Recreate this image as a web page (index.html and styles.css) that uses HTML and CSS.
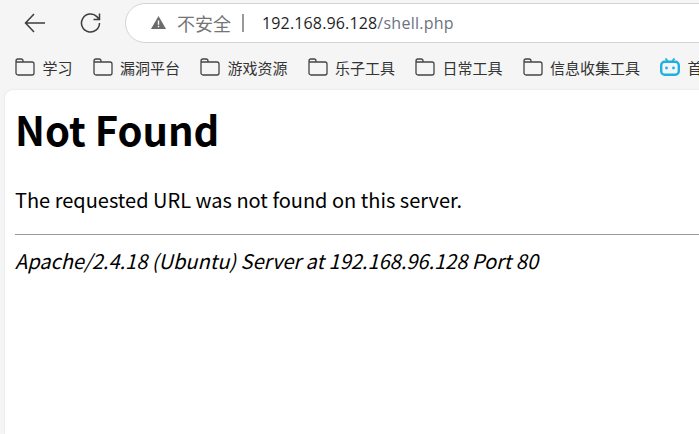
FILE: index.html
```html
<!DOCTYPE html>
<html lang="zh-CN">
<head>
    <meta charset="UTF-8">
    <title>404 Not Found</title>
    <link rel="stylesheet" href="styles.css">
</head>
<body>
    <div class="toolbar">
        <svg class="nav-back" width="22" height="22" viewBox="0 0 22 22"><path d="M21 11H2M10 2 1.500 11l8.500 9" fill="none" stroke="#3c3c3c" stroke-width="1.500"/></svg>
        <svg class="nav-reload" width="22" height="22" viewBox="0 0 22 22"><path d="M19.500 11a9 9 0 1 1-2.640-6.360L19.500 7.500M19.500 1.500v6h-6" fill="none" stroke="#3c3c3c" stroke-width="1.500"/></svg>
        <div class="address">
            <svg class="warn" width="15" height="13" viewBox="0 0 15 13"><path d="M7.500 0 15 13H0z" fill="#6b6b6b"/><path d="M6.800 4.500h1.400v4.300H6.800zM6.800 9.800h1.400v1.400H6.800z" fill="#fff"/></svg>
            <span class="insecure">不安全</span>
            <span class="divider"></span>
            <span class="host">192.168.96.128</span><span class="path">/shell.php</span>
        </div>
    </div>
    <div class="bookmarks">
        <div class="mark"><svg class="folder" width="20" height="18" viewBox="0 0 20 18"><path d="M1 4V3A2 2 0 0 1 3 1h3a2 2 0 0 1 2 2v1h9a2 2 0 0 1 2 2v9a2 2 0 0 1-2 2H3a2 2 0 0 1-2-2zH8" fill="none" stroke="#444" stroke-width="1.300"/></svg>学习</div>
        <div class="mark"><svg class="folder" width="20" height="18" viewBox="0 0 20 18"><path d="M1 4V3A2 2 0 0 1 3 1h3a2 2 0 0 1 2 2v1h9a2 2 0 0 1 2 2v9a2 2 0 0 1-2 2H3a2 2 0 0 1-2-2zH8" fill="none" stroke="#444" stroke-width="1.300"/></svg>漏洞平台</div>
        <div class="mark"><svg class="folder" width="20" height="18" viewBox="0 0 20 18"><path d="M1 4V3A2 2 0 0 1 3 1h3a2 2 0 0 1 2 2v1h9a2 2 0 0 1 2 2v9a2 2 0 0 1-2 2H3a2 2 0 0 1-2-2zH8" fill="none" stroke="#444" stroke-width="1.300"/></svg>游戏资源</div>
        <div class="mark"><svg class="folder" width="20" height="18" viewBox="0 0 20 18"><path d="M1 4V3A2 2 0 0 1 3 1h3a2 2 0 0 1 2 2v1h9a2 2 0 0 1 2 2v9a2 2 0 0 1-2 2H3a2 2 0 0 1-2-2zH8" fill="none" stroke="#444" stroke-width="1.300"/></svg>乐子工具</div>
        <div class="mark"><svg class="folder" width="20" height="18" viewBox="0 0 20 18"><path d="M1 4V3A2 2 0 0 1 3 1h3a2 2 0 0 1 2 2v1h9a2 2 0 0 1 2 2v9a2 2 0 0 1-2 2H3a2 2 0 0 1-2-2zH8" fill="none" stroke="#444" stroke-width="1.300"/></svg>日常工具</div>
        <div class="mark"><svg class="folder" width="20" height="18" viewBox="0 0 20 18"><path d="M1 4V3A2 2 0 0 1 3 1h3a2 2 0 0 1 2 2v1h9a2 2 0 0 1 2 2v9a2 2 0 0 1-2 2H3a2 2 0 0 1-2-2zH8" fill="none" stroke="#444" stroke-width="1.300"/></svg>信息收集工具</div>
        <div class="mark"><svg class="folder" width="20" height="18" viewBox="0 0 20 18"><path d="M5.500.5 8 3.500M14.500.5 12 3.500" fill="none" stroke="#1fb0e2" stroke-width="1.800"/><rect x="1.200" y="3.800" width="17.600" height="13" rx="3.500" fill="none" stroke="#1fb0e2" stroke-width="2.400"/><circle cx="6.500" cy="10" r="1.400" fill="#1fb0e2"/><circle cx="13.500" cy="10" r="1.400" fill="#1fb0e2"/></svg>首</div>
    </div>
    <div class="page">
        <h1>Not Found</h1>
        <p>The requested URL was not found on this server.</p>
        <hr>
        <address>Apache/2.4.18 (Ubuntu) Server at 192.168.96.128 Port 80</address>
    </div>
</body>
</html>
```

FILE: styles.css
```css
html, body {
    height: 100%;
}

body {
    margin: 0;
    overflow: hidden;
    background-color: #f5f5f5;
    font-family: "Noto Sans CJK SC", "Noto Sans", sans-serif;
    display: flex;
    flex-direction: column;
}

.toolbar {
    height: 46px;
    flex: none;
    display: flex;
    align-items: center;
    padding-left: 24px;
    white-space: nowrap;
}

.toolbar svg {
    flex: none;
}

.nav-reload {
    margin-left: 34px;
}

.address {
    flex: none;
    box-sizing: border-box;
    width: 620px;
    height: 40px;
    margin: 0 0 1px 23px;
    padding-left: 25px;
    display: flex;
    align-items: center;
    background-color: white;
    border: 1px solid #d4d4d4;
    border-radius: 20px;
    font-family: "Open Sans", "Noto Sans CJK SC", sans-serif;
    font-size: 16px;
    letter-spacing: 0.15px;
}

.insecure {
    margin-left: 11px;
    color: #757575;
    font-family: "Noto Sans CJK SC", sans-serif;
    font-size: 18px;
    letter-spacing: 0;
}

.divider {
    width: 2px;
    height: 18px;
    margin: 0 18px 0 11px;
    background-color: #999;
}

.host {
    color: #1f1f1f;
}

.path {
    color: #6b7280;
    letter-spacing: 0.25px;
}

.bookmarks {
    box-sizing: border-box;
    height: 44px;
    flex: none;
    display: flex;
    align-items: center;
    padding: 0 0 2px 15px;
    gap: 20px;
    font-size: 15px;
    color: #333;
    white-space: nowrap;
}

.mark {
    display: flex;
    align-items: center;
    flex: none;
}

.folder {
    margin-right: 7.500px;
}

.page {
    flex: 1;
    margin-left: 5px;
    padding: 0 0 0 10px;
    background-color: white;
    border-radius: 8px 0 0 0;
    box-shadow: 0 0 2px rgba(0, 0, 0, 0.12);
    color: black;
    overflow: hidden;
}

h1 {
    margin: 9px 0 0;
    font-size: 40px;
    line-height: 60px;
    font-weight: 700;
}

p {
    margin: 26px 0 0;
    font-size: 20px;
    line-height: 30px;
}

hr {
    margin: 19px 0 0;
    border: none;
    border-top: 1px solid #999;
}

address {
    margin-top: 11px;
    font-size: 20px;
    line-height: 30px;
    font-style: italic;
    white-space: nowrap;
}
```
